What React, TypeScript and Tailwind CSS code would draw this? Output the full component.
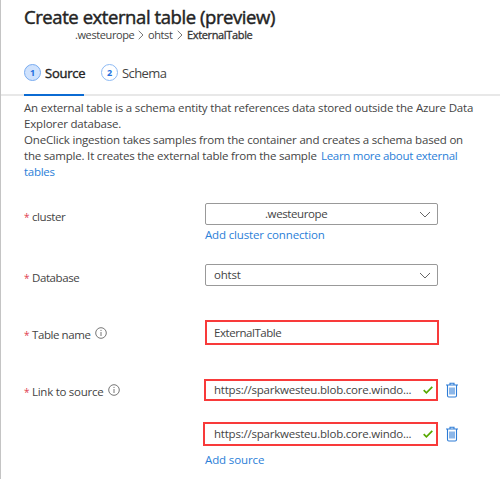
import React from "react";

const Chevron = () => (
  <svg className="h-[7px] w-3 shrink-0" viewBox="0 0 12 7" fill="none" stroke="#666" strokeWidth="1">
    <path d="M1 1l5 5 5-5" />
  </svg>
);

const Crumb = () => (
  <svg className="h-[10px] w-[6px] shrink-0" viewBox="0 0 6 10" fill="none" stroke="#777" strokeWidth="1">
    <path d="M.7.8L5 5 .7 9.2" />
  </svg>
);

const Info = () => (
  <svg className="mb-[5px] ml-[5px] h-3 w-3 shrink-0" viewBox="0 0 12 12" fill="none" stroke="#666" strokeWidth="0.9">
    <circle cx="6" cy="6" r="5.3" />
    <path d="M6 5v4M6 2.9v1.1" />
  </svg>
);

const Check = () => (
  <svg className="h-2 w-[10px] shrink-0" viewBox="0 0 10 8" fill="none" stroke="#57a800" strokeWidth="1.7">
    <path d="M.7 4.2l2.7 2.6L9.3.8" />
  </svg>
);

const Trash = () => (
  <svg className="h-4 w-3 shrink-0" viewBox="0 0 12 16" fill="none" stroke="#2e7cd6" strokeWidth="1.1">
    <path d="M0 3h12M4 3V1.2h4V3M1.5 3v10.6q0 1.4 1.3 1.4h6.4q1.3 0 1.3-1.4V3" />
    <path d="M4 5.5v7M6 5.5v7M8 5.5v7" />
  </svg>
);

const Label = ({ children, info }: { children: React.ReactNode; info?: boolean }) => (
  <div className="flex h-[22px] w-[181px] shrink-0 items-center tracking-[-0.42px]">
    <span className="w-2 text-[10px] text-[#e0404f]">*</span>
    {children}
    {info && <Info />}
  </div>
);

const Source = ({ wide }: { wide?: boolean }) => (
  <div className="flex items-center gap-2">
    <div
      className={
        wide
          ? "-ml-[2px] flex h-6 w-[235px] items-center border-2 border-[#f83a3a] pr-[3px] pl-[9px]"
          : "-ml-px flex h-[22px] w-[234px] items-center border-2 border-[#f83a3a] pr-[3px] pl-2"
      }
    >
      <span className="flex-1 whitespace-nowrap tracking-[-0.22px]">https://sparkwesteu.blob.core.windo...</span>
      <Check />
    </div>
    <Trash />
  </div>
);

export default function App() {
  return (
    <div className="h-[479px] w-[500px] overflow-hidden border-l border-[#c4c4c4] bg-white font-['Open_Sans','Noto_Sans',sans-serif] text-[11.5px] leading-4 whitespace-nowrap text-[#444]">
      <header className="pl-[23px]">
        <h1 className="h-[27px] pt-[6px] text-[18.5px] leading-[21px] tracking-[-0.43px] text-[#242424] [-webkit-text-stroke:0.45px_#242424]">
          Create external table (preview)
        </h1>
        <nav className="flex h-4 items-center pl-[51px] text-[11px]">
          <span className="w-[63px] tracking-[-0.4px]">.westeurope</span>
          <Crumb />
          <span className="ml-1 w-[29px] tracking-[-0.4px]">ohtst</span>
          <Crumb />
          <span className="ml-1 tracking-[-0.35px] text-[#333] [-webkit-text-stroke:0.3px_#333]">ExternalTable</span>
        </nav>
      </header>
      <div className="mt-[19px] flex h-[34px] border-b-2 border-[#e8e8e8] pl-[23px]">
        <div className="-mb-[2px] flex w-[60px] items-start gap-1 border-b-2 border-[#0b6bd3]">
          <span className="mt-[2px] flex h-[17px] w-[17px] shrink-0 items-center justify-center rounded-full border border-[#78abf0] bg-[#cfe2fd] text-[9px] font-bold text-[#2470dd]">1</span>
          <span className="pt-[3px] text-[13px] tracking-[-0.25px] text-[#242424] [-webkit-text-stroke:0.4px_#242424]">Source</span>
        </div>
        <div className="ml-[17px] flex items-start gap-1">
          <span className="mt-[2px] flex h-[17px] w-[17px] shrink-0 items-center justify-center rounded-full border border-[#8dbaf4] text-[9px] font-bold text-[#2470dd]">2</span>
          <span className="pt-[3px] text-[13px] tracking-[-0.6px]">Schema</span>
        </div>
      </div>
      <div className="h-[106px] pt-1 pl-[23px]">
        <div className="tracking-[-0.18px]">An external table is a schema entity that references data stored outside the Azure Data</div>
        <div className="tracking-[-0.18px]">Explorer database.</div>
        <div className="tracking-[-0.18px]">OneClick ingestion takes samples from the container and creates a schema based on</div>
        <div className="flex">
          <span className="w-[297px] tracking-[-0.2px]">the sample. It creates the external table from the sample</span>
          <a className="tracking-[-0.3px] text-[#2b80d8]">Learn more about external</a>
        </div>
        <a className="tracking-[-0.3px] text-[#2b80d8]">tables</a>
      </div>
      <div className="flex flex-col pl-[23px]">
        <div className="flex h-[61px] pt-px">
          <div className="pt-[3px]"><Label>cluster</Label></div>
          <div>
            <div className="flex h-[22px] w-[233px] items-center rounded-[2px] border border-[#999] pr-[6px] pl-[59px]">
              <span className="flex-1 tracking-[-0.4px]">.westeurope</span>
              <Chevron />
            </div>
            <a className="block pt-[2px] tracking-[-0.15px] text-[#2b80d8]">Add cluster connection</a>
          </div>
        </div>
        <div className="flex h-[57px] pt-px">
          <div className="pt-[3px]"><Label>Database</Label></div>
          <div className="flex h-[22px] w-[233px] items-center rounded-[2px] border border-[#999] pr-[6px] pl-2">
            <span className="flex-1 tracking-[-0.2px]">ohtst</span>
            <Chevron />
          </div>
        </div>
        <div className="flex h-[59px]">
          <div className="pt-[4px]"><Label info>Table name</Label></div>
          <div className="flex h-[25px] w-[234px] items-center border-2 border-[#f83a3a] pt-px pl-[7px]">
            <span className="tracking-[-0.45px]">ExternalTable</span>
          </div>
        </div>
        <div className="flex">
          <div className="pt-[2px]">
            <Label info>
              <span className="tracking-[-0.27px]">Link to source</span>
            </Label>
          </div>
          <div>
            <Source />
            <div className="h-[21px]" />
            <Source wide />
            <a className="block pt-[6px] tracking-[-0.12px] text-[#2b80d8]">Add source</a>
          </div>
        </div>
      </div>
    </div>
  );
}
